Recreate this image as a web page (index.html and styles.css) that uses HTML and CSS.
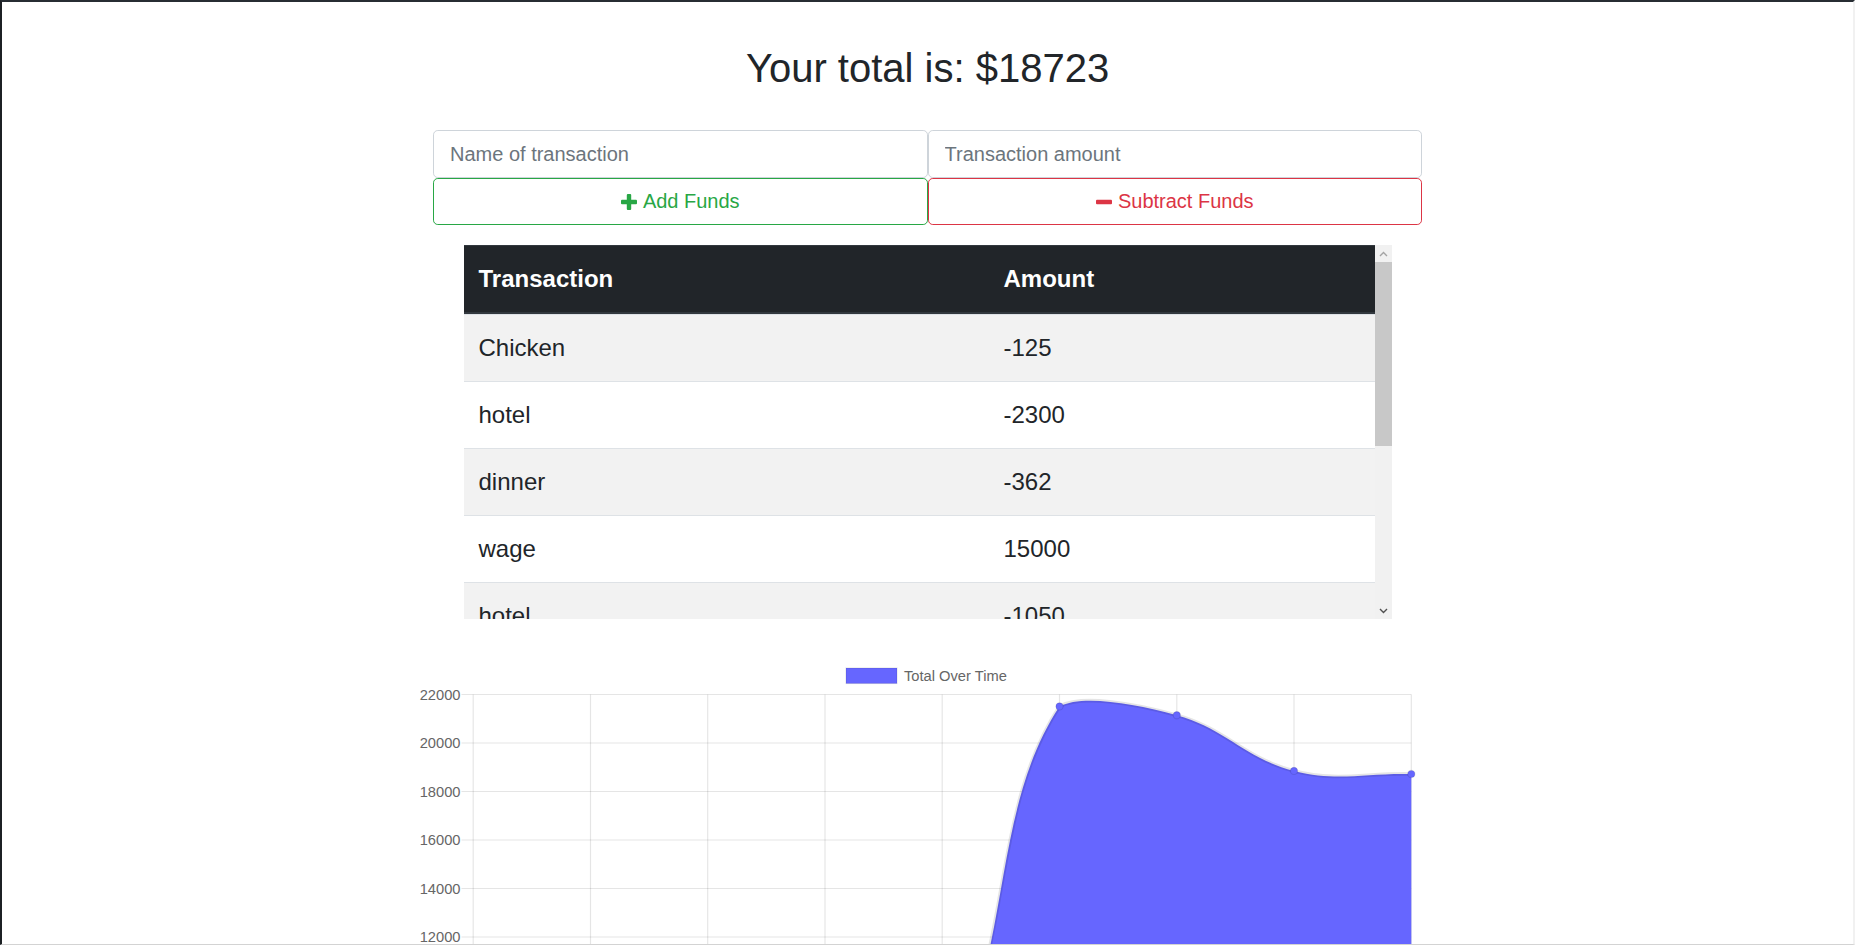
FILE: index.html
```html
<!DOCTYPE html>
<html lang="en">
<head>
<meta charset="utf-8">
<title>Budget Tracker</title>
<link rel="stylesheet" href="styles.css">
</head>
<body>
<div class="page-thumb"></div>
<main class="wrap">
  <h1 class="total">Your total is: $<span>18723</span></h1>

  <form class="entry">
    <input class="field" type="text" placeholder="Name of transaction">
    <input class="field" type="number" placeholder="Transaction amount">
    <button type="button" class="btn btn-add">
      <svg class="ico" width="16" height="16" viewBox="0 0 16 16"><rect x="5.8" y="0" width="4.4" height="16" rx="1"/><rect x="0" y="5.8" width="16" height="4.4" rx="1"/></svg>
      Add Funds
    </button>
    <button type="button" class="btn btn-sub">
      <svg class="ico" width="16" height="16" viewBox="0 0 16 16"><rect x="0" y="5.8" width="16" height="4.4" rx="1"/></svg>
      Subtract Funds
    </button>
  </form>

  <div class="table-box">
    <div class="table-view">
      <table class="tx">
        <thead>
          <tr><th class="c-name">Transaction</th><th>Amount</th></tr>
        </thead>
        <tbody>
          <tr><td>Chicken</td><td>-125</td></tr>
          <tr><td>hotel</td><td>-2300</td></tr>
          <tr><td>dinner</td><td>-362</td></tr>
          <tr><td>wage</td><td>15000</td></tr>
          <tr><td>hotel</td><td>-1050</td></tr>
          <tr><td>gas</td><td>-440</td></tr>
          <tr><td>bonus</td><td>2200</td></tr>
          <tr><td>groceries</td><td>-200</td></tr>
          <tr><td>savings</td><td>6000</td></tr>
        </tbody>
      </table>
    </div>
    <div class="vscroll">
      <div class="vs-btn"><svg width="9" height="6" viewBox="0 0 9 6"><polyline points="1,5 4.5,1.5 8,5" class="chev chev-off"/></svg></div>
      <div class="vs-track"><div class="vs-thumb"></div></div>
      <div class="vs-btn"><svg width="9" height="6" viewBox="0 0 9 6"><polyline points="1,1 4.5,4.5 8,1" class="chev"/></svg></div>
    </div>
  </div>

  <div class="chart">
    <svg class="chart-svg" width="989" height="300" viewBox="0 0 989 300">
      <g class="legend">
        <rect x="413" y="18" width="51" height="15.5" class="swatch"/>
        <text x="471" y="30.5" class="lbl">Total Over Time</text>
      </g>
      <g class="grid">
        <line x1="28.5" y1="44.5" x2="978.3" y2="44.5"/>
        <line x1="28.5" y1="93" x2="978.3" y2="93"/>
        <line x1="28.5" y1="141.5" x2="978.3" y2="141.5"/>
        <line x1="28.5" y1="190" x2="978.3" y2="190"/>
        <line x1="28.5" y1="238.5" x2="978.3" y2="238.5"/>
        <line x1="28.5" y1="287" x2="978.3" y2="287"/>
        <line x1="40.2" y1="44.5" x2="40.2" y2="300"/>
        <line x1="157.5" y1="44.5" x2="157.5" y2="300"/>
        <line x1="274.7" y1="44.5" x2="274.7" y2="300"/>
        <line x1="392" y1="44.5" x2="392" y2="300"/>
        <line x1="509.2" y1="44.5" x2="509.2" y2="300"/>
        <line x1="626.5" y1="44.5" x2="626.5" y2="300"/>
        <line x1="743.8" y1="44.5" x2="743.8" y2="300"/>
        <line x1="861" y1="44.5" x2="861" y2="300"/>
        <line x1="978.3" y1="44.5" x2="978.3" y2="300"/>
      </g>
      <g class="ylabels">
        <text x="27.5" y="49.8">22000</text>
        <text x="27.5" y="98.3">20000</text>
        <text x="27.5" y="146.8">18000</text>
        <text x="27.5" y="195.3">16000</text>
        <text x="27.5" y="243.8">14000</text>
        <text x="27.5" y="292.3">12000</text>
      </g>
      <path class="area" d="M40.2 432.5 C87.1 434.5,112.7 446.7,157.5 437.4 C206.5 427.3,225.7 392.9,274.7 384 C319.5 375.8,345.6 387.6,392 394.7 C439.4 402,486.8 452.4,509.2 420.1 C580.6 317.1,554.7 165,626.5 56.4 C648.6 44.5,699.2 52.9,743.8 65.2 C793 78.7,811.7 108.5,861 120.9 C905.5 132.1,931.4 122.8,978.3 124 L978.3 481 L40.2 481 Z"/>
      <path class="line" d="M40.2 432.5 C87.1 434.5,112.7 446.7,157.5 437.4 C206.5 427.3,225.7 392.9,274.7 384 C319.5 375.8,345.6 387.6,392 394.7 C439.4 402,486.8 452.4,509.2 420.1 C580.6 317.1,554.7 165,626.5 56.4 C648.6 44.5,699.2 52.9,743.8 65.2 C793 78.7,811.7 108.5,861 120.9 C905.5 132.1,931.4 122.8,978.3 124"/>
      <g class="pts">
        <circle cx="626.5" cy="56.4" r="3.6"/>
        <circle cx="743.8" cy="65.2" r="3.6"/>
        <circle cx="861" cy="120.9" r="3.6"/>
        <circle cx="978.3" cy="124" r="3.6"/>
      </g>
    </svg>
  </div>
</main>
</body>
</html>
```

FILE: styles.css
```css
* {
  box-sizing: border-box;
}

html {
  height: 100%;
  overflow: hidden;
}

body {
  margin: 0;
  height: 945px;
  overflow: hidden;
  position: relative;
  background: #fff;
  color: #212529;
  font-family: "Liberation Sans", Arial, Helvetica, sans-serif;
  border-top: 2px solid #272d33;
  border-left: 2px solid #1c2024;
  border-right: 2px solid #f1f1f1;
  border-bottom: 1px solid #d3d3d3;
}

.page-thumb {
  position: absolute;
  right: -2px;
  top: 18px;
  width: 2px;
  height: 732px;
  background: #c1c1c1;
}

.wrap {
  padding-top: 42px;
}

.total {
  margin: 0;
  font-size: 40px;
  line-height: 48px;
  font-weight: 400;
  text-align: center;
  color: #212529;
}

.entry {
  width: 989px;
  margin: 38px auto 0;
  display: grid;
  grid-template-columns: 1fr 1fr;
}

.field {
  height: 48px;
  padding: 0 16px;
  border: 1px solid #ced4da;
  border-radius: 4.8px;
  font-family: inherit;
  font-size: 20px;
  color: #495057;
  background: #fff;
  outline: none;
}

.field::placeholder {
  color: #6c757d;
  opacity: 1;
}

.field::-webkit-outer-spin-button,
.field::-webkit-inner-spin-button {
  -webkit-appearance: none;
  margin: 0;
}

.btn {
  height: 47px;
  display: flex;
  align-items: center;
  justify-content: center;
  gap: 6px;
  background: #fff;
  border: 1px solid;
  border-radius: 4.8px;
  font-family: inherit;
  font-size: 20px;
  padding: 0 16px;
  cursor: pointer;
}

.btn-add {
  color: #28a745;
  border-color: #28a745;
}

.btn-sub {
  color: #dc3545;
  border-color: #dc3545;
}

.ico {
  display: block;
  fill: currentColor;
}

.table-box {
  width: 928px;
  height: 374px;
  margin: 20px auto 0;
  display: flex;
}

.table-view {
  flex: 1;
  overflow: hidden;
}

.tx {
  width: 100%;
  border-collapse: separate;
  border-spacing: 0;
  font-size: 24px;
  line-height: 36px;
  color: #212529;
}

.tx th,
.tx td {
  padding: 15px 15px;
  text-align: left;
  vertical-align: top;
}

.tx th {
  background: #212529;
  color: #fff;
  font-weight: 700;
  border-top: 1px solid #32383e;
  border-bottom: 2px solid #32383e;
}

.tx .c-name {
  width: 525px;
}

.tx td {
  border-top: 1px solid #dee2e6;
}

.tx tbody tr:nth-child(odd) td {
  background: #f2f2f2;
}

.vscroll {
  width: 17px;
  display: flex;
  flex-direction: column;
  background: #f1f1f1;
}

.vs-btn {
  height: 17px;
  display: flex;
  align-items: center;
  justify-content: center;
}

.vs-btn svg {
  display: block;
}

.chev {
  fill: none;
  stroke: #505050;
  stroke-width: 1.4;
}

.chev-off {
  stroke: #a3a3a3;
}

.vs-track {
  flex: 1;
}

.vs-thumb {
  height: 184px;
  background: #c8c8c8;
}

.chart {
  width: 989px;
  margin: 31px auto 0;
}

.chart-svg {
  display: block;
  overflow: visible;
}

.swatch {
  fill: #6666ff;
  stroke: rgba(0, 0, 0, 0.1);
  stroke-width: 1.2;
}

.lbl {
  font-family: "Liberation Sans", Arial, sans-serif;
  font-size: 14.7px;
  fill: #666;
}

.grid line {
  stroke: rgba(0, 0, 0, 0.1);
  stroke-width: 1.2;
}

.ylabels text {
  font-family: "Liberation Sans", Arial, sans-serif;
  font-size: 14.7px;
  fill: #666;
  text-anchor: end;
}

.area {
  fill: #6666ff;
}

.line {
  fill: none;
  stroke: rgba(0, 0, 0, 0.1);
  stroke-width: 3.6;
}

.pts circle {
  fill: #6666ff;
  stroke: rgba(0, 0, 0, 0.1);
  stroke-width: 1.2;
}
```
